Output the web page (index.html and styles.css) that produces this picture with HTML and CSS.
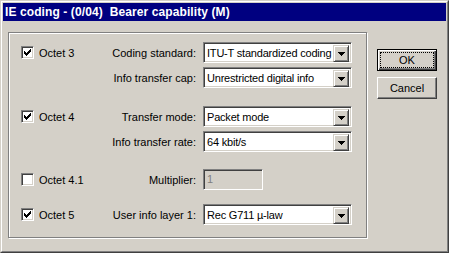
FILE: index.html
```html
<!DOCTYPE html>
<html>
<head>
  <meta charset="utf-8">
  <title>IE coding - Bearer capability</title>
  <link rel="stylesheet" href="styles.css">
</head>
<body>
<div class="window">
  <div class="frame">
    <div class="title">IE coding - (0/04)  Bearer capability (M)</div>
    <div class="content">
      <div class="group">
        <div class="row">
          <div class="opt"><span class="check on"><svg width="7" height="7" viewBox="0 0 7 7"><rect x="0" y="2" width="1" height="3"/><rect x="1" y="3" width="1" height="3"/><rect x="2" y="4" width="1" height="3"/><rect x="3" y="3" width="1" height="3"/><rect x="4" y="2" width="1" height="3"/><rect x="5" y="1" width="1" height="3"/><rect x="6" y="0" width="1" height="3"/></svg></span>Octet 3</div>
          <div class="lbl">Coding standard:</div>
          <div class="combo"><span class="val">ITU-T standardized coding</span><span class="arrow"><svg width="7" height="4" viewBox="0 0 7 4"><polygon points="0,0 7,0 3.5,4"/></svg></span></div>
        </div>
        <div class="row gap-s">
          <div class="opt"></div>
          <div class="lbl">Info transfer cap:</div>
          <div class="combo"><span class="val">Unrestricted digital info</span><span class="arrow"><svg width="7" height="4" viewBox="0 0 7 4"><polygon points="0,0 7,0 3.5,4"/></svg></span></div>
        </div>

        <div class="row gap-oct4">
          <div class="opt"><span class="check on"><svg width="7" height="7" viewBox="0 0 7 7"><rect x="0" y="2" width="1" height="3"/><rect x="1" y="3" width="1" height="3"/><rect x="2" y="4" width="1" height="3"/><rect x="3" y="3" width="1" height="3"/><rect x="4" y="2" width="1" height="3"/><rect x="5" y="1" width="1" height="3"/><rect x="6" y="0" width="1" height="3"/></svg></span>Octet 4</div>
          <div class="lbl">Transfer mode:</div>
          <div class="combo"><span class="val">Packet mode</span><span class="arrow"><svg width="7" height="4" viewBox="0 0 7 4"><polygon points="0,0 7,0 3.5,4"/></svg></span></div>
        </div>
        <div class="row gap-s">
          <div class="opt"></div>
          <div class="lbl">Info transfer rate:</div>
          <div class="combo"><span class="val">64 kbit/s</span><span class="arrow"><svg width="7" height="4" viewBox="0 0 7 4"><polygon points="0,0 7,0 3.5,4"/></svg></span></div>
        </div>

        <div class="row gap-oct41">
          <div class="opt"><span class="check"></span>Octet 4.1</div>
          <div class="lbl">Multiplier:</div>
          <div class="edit disabled">1</div>
        </div>

        <div class="row gap-oct5">
          <div class="opt"><span class="check on"><svg width="7" height="7" viewBox="0 0 7 7"><rect x="0" y="2" width="1" height="3"/><rect x="1" y="3" width="1" height="3"/><rect x="2" y="4" width="1" height="3"/><rect x="3" y="3" width="1" height="3"/><rect x="4" y="2" width="1" height="3"/><rect x="5" y="1" width="1" height="3"/><rect x="6" y="0" width="1" height="3"/></svg></span>Octet 5</div>
          <div class="lbl">User info layer 1:</div>
          <div class="combo"><span class="val">Rec G711 µ-law</span><span class="arrow"><svg width="7" height="4" viewBox="0 0 7 4"><polygon points="0,0 7,0 3.5,4"/></svg></span></div>
        </div>
      </div>

      <div class="buttons">
        <div class="btn default"><span class="focus">OK</span></div>
        <div class="btn">Cancel</div>
      </div>
    </div>
  </div>
</div>
</body>
</html>
```

FILE: styles.css
```css
:root {
    --face: #d4d0c8;
    --shadow: #808080;
    --dark: #404040;
    --light: #ffffff;
}
body {
    margin: 0;
    background-color: var(--face);
    font-family: "Liberation Sans", Arial, sans-serif;
    font-size: 11px;
    color: #000;
}
.window {
    width: 449px;
    height: 253px;
    box-sizing: border-box;
    border: 1px solid;
    border-color: var(--face) var(--dark) var(--dark) var(--face);
}
.frame {
    height: 100%;
    box-sizing: border-box;
    border: 1px solid;
    border-color: var(--light) var(--shadow) var(--shadow) var(--light);
    padding: 1px;
}
.title {
    height: 18px;
    line-height: 18px;
    background-color: #000080;
    color: #fff;
    font-weight: bold;
    font-size: 12px;
    letter-spacing: 0.1px;
    padding-left: 2px;
    white-space: pre;
}
.content {
    display: flex;
    align-items: flex-start;
    padding: 11px 0 0 5px;
}
.group {
    width: 359px;
    height: 206px;
    box-sizing: border-box;
    border: 1px solid var(--shadow);
    box-shadow: 1px 1px 0 var(--light), inset 1px 1px 0 var(--light);
    padding-top: 9px;
}
.row {
    display: grid;
    grid-template-columns: 90px 92px 149px;
    align-items: center;
    height: 21px;
    padding-left: 12px;
}
.gap-s { margin-top: 4px; }
.gap-oct4 { margin-top: 18px; }
.gap-oct41 { margin-top: 17px; }
.gap-oct5 { margin-top: 14px; }
.opt {
    display: flex;
    align-items: center;
    white-space: nowrap;
}
.check {
    width: 13px;
    height: 13px;
    box-sizing: border-box;
    margin-right: 5px;
    background-color: #fff;
    border: 1px solid;
    border-color: var(--shadow) var(--light) var(--light) var(--shadow);
    box-shadow: inset 1px 1px 0 var(--dark), inset -1px -1px 0 var(--face);
    padding: 2px 0 0 2px;
}
.check svg {
    display: block;
    shape-rendering: crispEdges;
}
.lbl {
    text-align: right;
    padding-right: 7px;
    white-space: nowrap;
}
.combo, .edit {
    height: 21px;
    box-sizing: border-box;
    border: 1px solid;
    border-color: var(--shadow) var(--light) var(--light) var(--shadow);
    box-shadow: inset 1px 1px 0 var(--dark), inset -1px -1px 0 var(--face);
    background-color: #fff;
}
.combo {
    display: flex;
    padding: 2px;
}
.val {
    flex: 1;
    padding-left: 1px;
    line-height: 17px;
    letter-spacing: -0.2px;
    white-space: nowrap;
    overflow: hidden;
}
.arrow {
    width: 16px;
    height: 17px;
    box-sizing: border-box;
    background-color: var(--face);
    border: 1px solid;
    border-color: var(--face) var(--dark) var(--dark) var(--face);
    box-shadow: inset 1px 1px 0 var(--light), inset -1px -1px 0 var(--shadow);
    display: flex;
    align-items: center;
    justify-content: center;
}
.arrow svg {
    display: block;
    shape-rendering: crispEdges;
}
.edit {
    width: 60px;
    padding: 0 0 0 3px;
    line-height: 19px;
}
.edit.disabled {
    background-color: var(--face);
    color: var(--shadow);
}
.buttons {
    margin: 17px 0 0 10px;
}
.btn {
    width: 60px;
    height: 22px;
    box-sizing: border-box;
    border: 1px solid;
    border-color: var(--light) var(--dark) var(--dark) var(--light);
    box-shadow: inset -1px -1px 0 var(--shadow);
    display: flex;
    align-items: center;
    justify-content: center;
    margin-bottom: 6px;
}
.btn.default {
    border: 1px solid #000;
    box-shadow: inset 1px 1px 0 var(--light), inset -1px -1px 0 var(--dark), inset -2px -2px 0 var(--shadow);
    padding: 3px;
}
.focus {
    flex: 1;
    align-self: stretch;
    display: flex;
    align-items: center;
    justify-content: center;
    outline: 1px dotted #000;
}
```
